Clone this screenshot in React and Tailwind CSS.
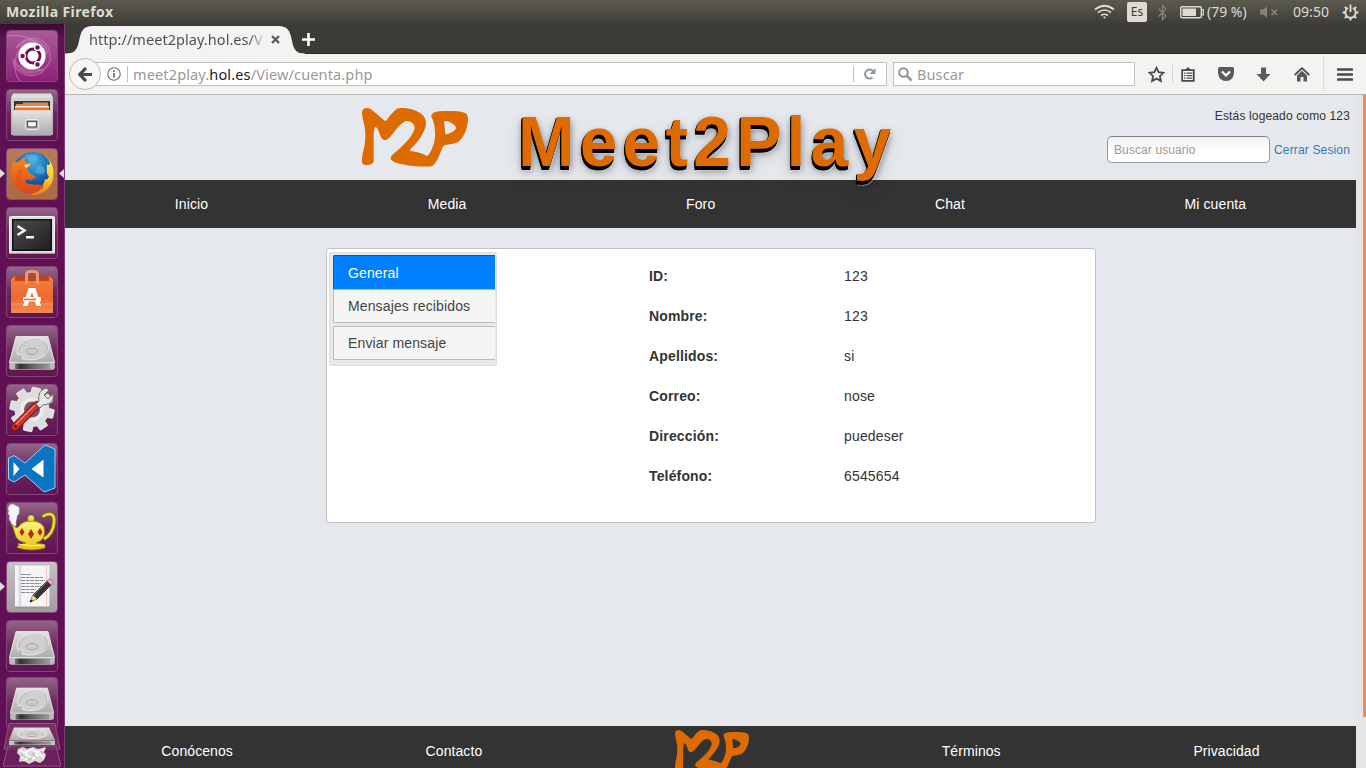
import React from "react";

const LOGO_SHAPE =
  "M66 54C65 38 84 34 97 46L134 77Q137 79 141 74C152 60 164 44 174 40C190 36 222 42 240 54C256 64 260 78 257 94C250 120 231 144 211 163Q208 168 216 169C234 171 250 177 259 182Q263 184 267 178C281 156 287 132 285 108C284 90 281 79 274 65C272 50 296 47 328 48C362 48 384 50 384 70C384 96 375 122 358 138C344 149 321 147 311 152Q307 155 304 166C298 182 288 206 278 212C262 218 196 214 164 202C150 196 149 187 157 180C177 162 218 130 224 100C224 84 208 75 196 79C178 86 162 114 148 128C138 138 130 137 124 128C117 115 114 97 107 96C100 97 101 124 101 150L101 198C100 210 82 211 73 209C66 207 66 202 66 197C66 172 76 156 76 125C77 92 67 76 66 54ZM312 82C313 76 321 78 330 82C342 88 349 94 348 100C346 108 330 115 321 118Q316 119 315 113C316 102 313 92 312 82Z";

function Logo({ className }) {
  return (
    <svg className={className} viewBox="66 39 318 177" preserveAspectRatio="none" aria-hidden="true">
      <path d={LOGO_SHAPE} fill="#dd6b00" fillRule="evenodd" />
    </svg>
  );
}

function SharedGradients() {
  return (
    <svg className="absolute h-0 w-0" aria-hidden="true">
      <defs>
        <linearGradient id="silver" x1="0" y1="0" x2="0" y2="1">
          <stop offset="0" stopColor="#e2e2e2" />
          <stop offset="1" stopColor="#adadad" />
        </linearGradient>
        <linearGradient id="darkEdge" x1="0" y1="0" x2="1" y2="0">
          <stop offset="0" stopColor="#777" />
          <stop offset="0.15" stopColor="#303030" />
          <stop offset="0.5" stopColor="#666" />
          <stop offset="1" stopColor="#9c9c9c" />
        </linearGradient>
        <linearGradient id="bag" x1="0" y1="0" x2="0" y2="1">
          <stop offset="0" stopColor="#f07f3f" />
          <stop offset="0.6" stopColor="#ee6a2e" />
          <stop offset="1" stopColor="#f38a52" />
        </linearGradient>
        <linearGradient id="screen" x1="0" y1="0" x2="1" y2="1">
          <stop offset="0" stopColor="#4c4c4c" />
          <stop offset="1" stopColor="#202020" />
        </linearGradient>
        <linearGradient id="foxBody" x1="0" y1="0" x2="0" y2="1">
          <stop offset="0" stopColor="#f08a28" />
          <stop offset="0.6" stopColor="#e8601c" />
          <stop offset="1" stopColor="#d8481a" />
        </linearGradient>
        <linearGradient id="flame" x1="0" y1="0" x2="0" y2="1">
          <stop offset="0" stopColor="#fff06a" />
          <stop offset="0.6" stopColor="#ffc92e" />
          <stop offset="1" stopColor="#ef7d1c" />
        </linearGradient>
        <radialGradient id="globe" cx="0.5" cy="0.25" r="0.7">
          <stop offset="0" stopColor="#43b1e6" />
          <stop offset="0.6" stopColor="#1b66ac" />
          <stop offset="1" stopColor="#12366f" />
        </radialGradient>
        <linearGradient id="gold" x1="0" y1="0" x2="0" y2="1">
          <stop offset="0" stopColor="#fff67e" />
          <stop offset="1" stopColor="#e5c413" />
        </linearGradient>
      </defs>
    </svg>
  );
}

const svgTile = "block h-full w-full";

function UbuntuIcon() {
  return (
    <svg className={svgTile} viewBox="0 0 52 52">
      <g fill="none" stroke="#e6b9da" strokeOpacity=".38" strokeWidth="1.2">
        <path d="M10 18C18 4 42 4 44 24C46 34 38 42 30 40" />
        <path d="M7 29C8 45 28 51 38 40" />
        <path d="M0 6C14 4 27 7 38 20M15 52C6 43 7 25 17 16" />
      </g>
      <path d="M10 19C17 5 39 5 43 23L38 26C36 14 24 9 10 19ZM8 29C10 44 25 49 36 40L32 37C22 42 14 37 8 29Z" fill="#dc9ccb" opacity=".35" />
      <circle cx="26" cy="26" r="13.6" fill="#fff" />
      <circle cx="27" cy="26" r="7" fill="none" stroke="#6b1155" strokeWidth="2.8" />
      <g stroke="#fff" strokeWidth="1.3">
        <circle cx="16.6" cy="26" r="2.9" fill="#6b1155" />
        <circle cx="31.5" cy="17.6" r="2.9" fill="#6b1155" />
        <circle cx="31.5" cy="34.6" r="2.9" fill="#6b1155" />
      </g>
    </svg>
  );
}

function FilesIcon() {
  return (
    <svg className={svgTile} viewBox="0 0 52 52">
      <path d="M7 4.5H45L47 9V46H5V9Z" fill="url(#silver)" />
      <path d="M5 9H47V22H5Z" fill="#d0d0d0" />
      <rect x="8" y="12" width="36" height="9" fill="#383838" />
      <path d="M10 15H17V13.5H42V21H10Z" fill="#d9874f" />
      <path d="M9 17H43V22H9Z" fill="#f4f0e8" />
      <path d="M9 18.5H43V21.5H9Z" fill="#ef7131" />
      <path d="M7 21.5H45V46H7Z" fill="url(#silver)" />
      <path d="M7 46.5H45" stroke="#888" />
      <rect x="19.5" y="30.5" width="13" height="10" rx="1.5" fill="#b5b5b5" stroke="#eee" />
      <rect x="21.500" y="32.500" width="9" height="5.500" fill="#f5f5f5" stroke="#555" strokeWidth="1.2" />
    </svg>
  );
}

function FirefoxIcon() {
  return (
    <svg className={svgTile} viewBox="0 0 52 52">
      <circle cx="27" cy="24.5" r="20.5" fill="url(#globe)" />
      <path d="M18 8Q28 4 33 9Q31 14 24 13ZM32 17Q40 18 39 25Q34 28 29 24Z" fill="#75cdef" opacity=".4" />
      <path d="M38 7C46 13 49 21 47 31C45 40 37 47 27 47L21 43C33 43 38 38 39 31C41 32 42 31 43 28C40 28 41 18 41 16C42 18 44 17 44 15C43 12 41 10 38 7Z" fill="url(#flame)" />
      <path d="M8 12C9 14 10 14 12 14C16 10 18 10 20 9C17 13 20 15 25 16C24 18 22 19 21 21C23 24 26 27 30 29L26 32C21 31 18 31 20 35C26 38 32 35 38 38C33 45 24 48 16 44C5 38 2 26 6 17C7 15 7 14 8 12Z" fill="url(#foxBody)" />
      <path d="M18 21C14 24 13 31 17 36C22 40 30 40 35 38L38 36C34 45 23 46 16 40C10 35 9 27 13 22Z" fill="#dd4b18" opacity=".5" />
      <path d="M18 17L25 16L20 20Z" fill="#f9e5c1" />
    </svg>
  );
}

function TerminalIcon() {
  return (
    <svg className={svgTile} viewBox="0 0 52 52">
      <rect x="3.5" y="9.5" width="45" height="37" rx="1" fill="#dcdcdc" stroke="#f4f4f4" />
      <path d="M3 46.5H49" stroke="#999" />
      <rect x="6" y="12" width="40" height="32" fill="#111" />
      <rect x="7.5" y="13.5" width="37" height="29" fill="url(#screen)" />
      <path d="M11.5 19L18.5 23.5L11.5 28" fill="none" stroke="#f5f5f5" strokeWidth="2.6" />
      <path d="M20 30.3H28" stroke="#f5f5f5" strokeWidth="2.4" />
    </svg>
  );
}

function SoftwareIcon() {
  return (
    <svg className={svgTile} viewBox="0 0 52 52">
      <path d="M8 10H45L47 15H5Z" fill="#b8451b" />
      <path d="M5 13L9 10V15H43V10L47 13V47H5Z" fill="url(#bag)" />
      <path d="M5 38H47" stroke="#fff" strokeOpacity=".25" />
      <path d="M20.5 18V8.5Q20.5 5.5 24 5.5H28Q31.5 5.5 31.5 8.5V18" fill="none" stroke="#f0966b" strokeWidth="3" />
      <path d="M22.500 22H29.500L35 40H30.500L26 26L21.500 40H17Z" fill="#fff" />
      <rect x="17" y="31" width="18" height="4.6" rx="1" fill="#fff" />
      <rect x="18" y="32.7" width="12" height="1.5" fill="#ee6a2e" />
    </svg>
  );
}

function DriveIcon() {
  return (
    <svg className={svgTile} viewBox="0 0 52 52">
      <path d="M10 11.5H42L48.5 36V43Q48 44.5 46.500 44.500H5.500Q3.500 44.500 3.500 43V36Z" fill="#bcbcbc" />
      <path d="M10 11.500H42L48.500 37.500H3.500Z" fill="url(#silver)" stroke="#e8e8e8" strokeWidth=".8" />
      <path d="M3.500 38H48.500V43Q48 44.500 46.500 44.500H5.500Q3.500 44.500 3.500 43Z" fill="#bbb" />
      <rect x="9" y="38.700" width="35" height="5.500" fill="url(#darkEdge)" />
      <path d="M12 30Q8 22 20 15Q30 10 40 16Q46 24 38 31Q29 37 16 34Q19 28 12 30Z" fill="#cfcfcf" stroke="#ececec" strokeWidth=".9" />
      <path d="M13 28Q12 20 21 16.500M39 30Q44 24 39 17.500" fill="none" stroke="#aaa" strokeWidth=".7" />
      <ellipse cx="26" cy="26.500" rx="5.500" ry="3.200" fill="#cbcbcb" stroke="#9f9f9f" strokeWidth=".9" />
    </svg>
  );
}

function SettingsIcon() {
  return (
    <svg className={svgTile} viewBox="0 0 52 52">
      <g transform="translate(26 25.500)">
        <g fill="#dedede" stroke="#fafafa" strokeWidth=".7">
          {[0, 45, 90, 135].map((a) => (
            <rect key={a} x="-4.500" y="-22" width="9" height="44" rx="1" transform={`rotate(${a + 12})`} />
          ))}
        </g>
        <circle r="17.500" fill="#dedede" />
        <circle r="11.500" fill="#ededed" />
        <circle r="8" fill="#74586d" />
      </g>
      <path d="M9 43L31 21" stroke="#7d1410" strokeWidth="8" strokeLinecap="round" />
      <path d="M9 43L31 21" stroke="#d4322d" strokeWidth="6" strokeLinecap="round" />
      <path d="M10 40L29 21" stroke="#f27f77" strokeWidth="1.500" />
      <circle cx="9.500" cy="42.500" r="1.700" fill="#6e1713" />
      <path d="M30 20L33 17Q31 7 40 4L43 6L38 11L42 15L47 10Q49 20 37 21L34 24Z" fill="#e8e8e8" stroke="#6e6e6e" />
    </svg>
  );
}

function CodeIcon() {
  return (
    <svg className={svgTile} viewBox="0 0 52 52">
      <path d="M39 2L49 6V45L38 49L19 32L8 39L2.500 36V15L8 12.500L19 20Z" fill="#0b75c4" stroke="#a9cdea" strokeWidth="1" />
      <path d="M7.500 19L13.500 26L7.500 33ZM37.500 16.500V34.500L25.500 26Z" fill="#fff" />
    </svg>
  );
}

function LampIcon() {
  return (
    <svg className={svgTile} viewBox="0 0 52 52">
      <path d="M4 3Q7 1 10 4Q14 4 13 8Q14 12 11 14Q11 17 10 19L10 24H6L5 20Q2 17 4 14Q1 12 3 9Q1 6 4 3Z" fill="#f5f5f5" stroke="#cfcfcf" strokeWidth=".5" />
      <path d="M37 15Q39 12 44 12Q49 13 48 21Q47 32 38 37" fill="none" stroke="#806b0b" strokeWidth="4" />
      <path d="M37 15Q39 12 44 12Q49 13 48 21Q47 32 38 37" fill="none" stroke="#f0db35" strokeWidth="2.600" />
      <path d="M6 22Q11 28 13 24Q17 19 25 18Q34 19 38 25Q41 38 30 41Q41 42 39 46Q26 50 12 46Q8 44 20 41Q10 39 9 32Z" fill="url(#gold)" stroke="#947a0d" strokeWidth=".8" />
      <path d="M14 22Q25 16 36 22" fill="none" stroke="#a9890e" />
      <circle cx="25" cy="16.500" r="3.200" fill="url(#gold)" stroke="#a9890e" strokeWidth=".6" />
      <path d="M16 26L18.500 30L16 34L13.500 30ZM25 27L28 32L25 37L22 32ZM34 26L36.500 30L34 34L31.500 30Z" fill="#bd2618" />
      <path d="M12 42Q25 45 39 43" fill="none" stroke="#fff78b" />
    </svg>
  );
}

function EditorIcon() {
  return (
    <svg className={svgTile} viewBox="0 0 52 52">
      <rect x="9" y="5.500" width="35" height="42" fill="#888" opacity=".4" />
      <rect x="9" y="4.500" width="34.500" height="41" fill="#f5f5f5" />
      <path d="M13 5V45M40.500 5V45" stroke="#f1b7b7" strokeWidth=".8" />
      <path d="M14.500 5V45" stroke="#b7cdf1" strokeWidth=".8" />
      <path d="M15 13.500H25M15 16.500H37M15 19.500H39M15 22.500H35M15 25.500H36M15 28.500H30M15 31.500H28" stroke="#8a8a8a" strokeWidth="1" strokeDasharray="4 .6" />
      <path d="M24 41L27 34L42 19L46 23L31 38Z" fill="#333" stroke="#111" strokeWidth=".6" />
      <path d="M28 34L42 20" stroke="#777" strokeWidth="1" />
      <path d="M24 41L27 34L31 38Z" fill="#e9d484" />
      <path d="M23.500 41.500L25 38.500L27 40Z" fill="#111" />
      <path d="M41 20L43 18Q46 17 47 20Q48 22 45 24Z" fill="#e9a3c5" stroke="#9a4f78" strokeWidth=".5" />
    </svg>
  );
}

const TILE =
  "relative h-[52px] w-[52px] shrink-0 overflow-hidden rounded-[4px] border border-[#84477a]";
const GLASS = "bg-linear-to-b from-[#93668a] via-[#6a255c] to-[#611453]";

const LAUNCHER = [
  { id: "dash", Icon: UbuntuIcon, tone: "bg-linear-to-b from-[#a95a98] to-[#8d2078]" },
  { id: "files", Icon: FilesIcon, tone: GLASS },
  { id: "firefox", Icon: FirefoxIcon, tone: "bg-linear-to-b from-[#b77c58] to-[#aa6a43]", running: true, active: true },
  { id: "terminal", Icon: TerminalIcon, tone: GLASS },
  { id: "software", Icon: SoftwareIcon, tone: GLASS },
  { id: "drive-a", Icon: DriveIcon, tone: GLASS },
  { id: "settings", Icon: SettingsIcon, tone: GLASS },
  { id: "code", Icon: CodeIcon, tone: GLASS },
  { id: "lamp", Icon: LampIcon, tone: GLASS },
  { id: "editor", Icon: EditorIcon, tone: "bg-linear-to-b from-[#c8c1c5] to-[#a69ba3]", running: true },
  { id: "drive-b", Icon: DriveIcon, tone: GLASS },
];

function Launcher() {
  return (
    <aside className="relative w-[65px] shrink-0 overflow-hidden border-r border-[#7d3c72] bg-linear-to-b from-[#3b0a33] via-[#5f1052] via-[2%] to-[#620f55]">
      <SharedGradients />
      <div className="flex flex-col items-center gap-[7px] pt-[6px]">
        {LAUNCHER.map(({ id, Icon, tone, running, active }) => (
          <div key={id} className="relative flex w-full justify-center">
            <div className={`${TILE} ${tone}`}>
              <div className="-m-px h-[52px] w-[52px]">
                <Icon />
              </div>
            </div>
            {running && (
              <svg className="absolute top-[21px] left-0 h-[9px] w-[5px]" viewBox="0 0 5 9">
                <path d="M0 0L5 4.500L0 9Z" fill="#ddd" />
              </svg>
            )}
            {active && (
              <svg className="absolute top-[21px] right-0 h-[9px] w-[5px]" viewBox="0 0 5 9">
                <path d="M5 0L0 4.500L5 9Z" fill="#ddd" />
              </svg>
            )}
          </div>
        ))}
      </div>
      <div className="mt-[5px] flex flex-col items-center">
        <div className={`${TILE} ${GLASS}`}>
          <div className="-m-px h-[50px] w-[52px]">
            <DriveIcon />
          </div>
        </div>
        <svg className="relative -mt-[6px] h-[45px] w-[58px] shrink-0" viewBox="0 0 58 45">
          <path d="M6 .5H52L57 26H1Z" fill="#753567" fillOpacity=".8" stroke="#90577f" />
          <path d="M11 4.500H46L52 17H6Z" fill="url(#silver)" />
          <path d="M6 17.500H52V22H6Z" fill="#c4c4c4" />
          <rect x="11" y="18.500" width="37" height="3" fill="url(#darkEdge)" />
          <ellipse cx="29" cy="11" rx="15" ry="4.500" fill="#cfcfcf" stroke="#ececec" />
          <ellipse cx="29" cy="12" rx="5" ry="1.700" fill="#d0d0d0" stroke="#a4a4a4" strokeWidth=".7" />
          <path d="M5 23H53L58 43H0Z" fill="#6f2b61" fillOpacity=".6" stroke="#90577f" />
          <path d="M15 26L20 24L24 26L30 24L35 26L43 24L41 29L43 32L41 37L37 40L32 38L26 41L21 38L16 39L17 33L14 30Z" fill="#d9d9d6" />
          <path d="M16 27L22 30L29 26L34 30L42 26M18 35L24 32L30 36L37 31L41 35M22 28L26 34M35 27L32 34M20 38L25 35" fill="none" stroke="#fff" strokeWidth="1.200" />
          <path d="M18 31L22 34M29 30L34 35M25 37L29 35M37 28L41 30" stroke="#999" strokeWidth=".8" />
        </svg>
      </div>
    </aside>
  );
}

function TopBar() {
  return (
    <header className="flex h-6 shrink-0 items-center bg-linear-to-b from-[#5c5a4f] to-[#3e3d38] pr-[7px] pl-[6px] font-['Noto_Sans','Open_Sans',sans-serif] text-[#dfdbd2]">
      <span className="text-[14px] leading-6 font-bold tracking-[0.4px]">Mozilla Firefox</span>
      <div className="ml-auto flex h-6 items-center">
        <svg className="h-4 w-[21px]" viewBox="0 0 21 16" fill="none" stroke="#dfdbd2" strokeWidth="1.700">
          <path d="M1 5.500Q10.500-2 20 5.500M4 8.500Q10.500 3.500 17 8.500M7 11.500Q10.500 9 14 11.500" />
          <path d="M9 13Q10.500 12 12 13L10.500 14.800Z" fill="#dfdbd2" stroke="none" />
        </svg>
        <span className="ml-[12px] flex h-5 w-5 items-center justify-center rounded-[2px] bg-[#dfdbd2] text-[12px] text-[#3c3b37]">
          Es
        </span>
        <svg className="ml-[10px] h-[17px] w-[11px]" viewBox="0 0 11 17" fill="none" stroke="#85837c" strokeWidth="1.300">
          <path d="M1.500 4.500L9 12L5.500 15.500V1.500L9 5L1.500 12.500" />
        </svg>
        <svg className="ml-[12px] h-[14px] w-6" viewBox="0 0 24 14">
          <rect x=".7" y="1.700" width="20.600" height="11" rx="1.500" fill="none" stroke="#dfdbd2" strokeWidth="1.400" />
          <path d="M22 4.500H23.300V10H22" fill="none" stroke="#dfdbd2" strokeWidth="1.200" />
          <rect x="2.500" y="3.500" width="13.500" height="7.500" fill="#dfdbd2" />
        </svg>
        <span className="ml-[3px] w-[43px] text-[14px] leading-6 tracking-[0px] whitespace-nowrap">(79 %)</span>
        <svg className="ml-[10px] h-3 w-[19px]" viewBox="0 0 19 12">
          <path d="M0 3.500H3L7 .5V11.500L3 8.500H0Z" fill="#85837c" />
          <path d="M11.500 3.500L17 9M17 3.500L11.500 9" stroke="#85837c" strokeWidth="1.700" />
        </svg>
        <span className="ml-[14px] w-[37px] text-[14px] leading-6 tracking-[0.05px]">09:50</span>
        <svg className="ml-[12px] h-[17px] w-[17px]" viewBox="0 0 17 17" fill="none" stroke="#dfdbd2">
          <path d="M6 4A5.200 5.200 0 1 0 11 4" strokeWidth="1.900" />
          <path d="M8.500 .5V8" strokeWidth="1.900" />
          <path d="M.5 8.500H3.500M13.500 8.500H16.500M2.800 2.800L5 5M14.200 2.800L12 5M2.800 14.200L5 12M14.200 14.200L12 12M8.500 13.500V16.500" strokeWidth="1.900" />
        </svg>
      </div>
    </header>
  );
}

function TabStrip() {
  return (
    <div className="relative flex h-[30px] shrink-0 items-start border-b border-[#2b2a27] bg-[#3c3b37]">
      <svg className="absolute top-[2px] left-0 h-[28px] w-[240px]" viewBox="0 0 240 28">
        <path d="M0 28V27.500C9 27.500 12 25 14 15C16 5 18 0 28 0H213C223 0 225 5 227 15C229 25 232 27.500 240 27.500V28Z" fill="#f4f3f1" />
      </svg>
      <div className="relative flex h-full items-center pt-[2px] pl-6 font-['Noto_Sans','Open_Sans',sans-serif] text-[14.500px] text-[#4c4c4c]">
        <span className="w-[177px] bg-linear-to-r from-[#4c4c4c] from-[91%] to-transparent bg-clip-text tracking-[0.05px] whitespace-nowrap text-transparent">
          http://meet2play.hol.es/V
        </span>
        <svg className="ml-[5px] h-[9px] w-[9px]" viewBox="0 0 9 9">
          <path d="M1 1L8 8M8 1L1 8" stroke="#5c5c5c" strokeWidth="2.300" />
        </svg>
        <svg className="ml-[22px] h-[13px] w-[13px]" viewBox="0 0 13 13">
          <path d="M6.500 0V13M0 6.500H13" stroke="#fff" strokeWidth="2.600" />
        </svg>
      </div>
    </div>
  );
}

function Toolbar() {
  return (
    <div className="flex h-[41px] shrink-0 items-center border-b border-[#b9b6b1] bg-[#f4f3f1] pr-[13px] pl-[4px] font-['Noto_Sans','Open_Sans',sans-serif] text-[14.500px]">
      <div className="z-10 flex h-8 w-8 shrink-0 items-center justify-center rounded-full border border-[#bcbab6] bg-[#f8f7f6]">
        <svg className="h-[15px] w-[14px]" viewBox="0 0 14 15">
          <path d="M8 1L1.800 7.500L8 14M2 7.500H14" fill="none" stroke="#4a4a4a" strokeWidth="3.200" />
        </svg>
      </div>
      <div className="-ml-[6px] flex h-6 w-[792px] shrink-0 items-center border border-[#c2c0bc] bg-white pl-[11px]">
        <svg className="h-[14px] w-[14px]" viewBox="0 0 14 14">
          <circle cx="7" cy="7" r="6.200" fill="none" stroke="#6d6d6d" strokeWidth="1.100" />
          <path d="M7 6V10.500M7 3.300V4.900" stroke="#555" strokeWidth="1.500" />
        </svg>
        <span className="ml-[6px] h-4 w-px bg-[#c2c0bc]" />
        <span className="ml-[5px] pt-px tracking-[0.14px] whitespace-nowrap text-[#999]">
          meet2play.<span className="text-[#222]">hol.es</span>/View/cuenta.php
        </span>
        <span className="ml-auto h-4 w-px bg-[#c2c0bc]" />
        <svg className="mr-[10px] ml-[10px] h-3 w-3" viewBox="0 0 12 12">
          <path d="M8.500 9.500A4.500 4.500 0 1 1 9 3.200" fill="none" stroke="#8b98a8" strokeWidth="2" />
          <path d="M11.500 0V6H5.500Z" fill="#8b98a8" />
        </svg>
      </div>
      <div className="ml-[6px] flex h-6 w-[242px] shrink-0 items-center border border-[#c2c0bc] bg-white pl-[4px]">
        <svg className="h-[15px] w-[15px]" viewBox="0 0 15 15">
          <circle cx="5.500" cy="5.500" r="4.300" fill="none" stroke="#969696" strokeWidth="2" />
          <path d="M8.500 8.500L13.500 13.500" stroke="#969696" strokeWidth="2.600" />
        </svg>
        <span className="ml-[4px] pt-px tracking-[0.1px] text-[#999]">Buscar</span>
      </div>
      <div className="flex h-full flex-1 items-center">
        <svg className="ml-[13px] h-[17px] w-[17px] shrink-0" viewBox="0 0 17 17">
          <path d="M8.500 1.800L10.600 6.200L15.500 6.800L11.900 10.200L12.900 15L8.500 12.600L4.100 15L5.100 10.200L1.500 6.800L6.400 6.200Z" fill="none" stroke="#4a4a4a" strokeWidth="1.800" />
        </svg>
        <span className="ml-[7px] h-[18px] w-px shrink-0 bg-[#d2d0cd]" />
        <svg className="ml-[8px] h-[15px] w-[14px] shrink-0" viewBox="0 0 14 15">
          <path d="M1.200 3.200H12.800V13.800H1.200Z" fill="#fff" stroke="#4a4a4a" strokeWidth="1.800" />
          <path d="M3.500 3.500L7 0L10.500 3.500Z" fill="#4a4a4a" />
          <path d="M3 6.200H4.500M5.500 6.200H11.500M3 8.700H4.500M5.500 8.700H11.500M3 11.200H4.500M5.500 11.200H11.500" stroke="#4a4a4a" strokeWidth="1.300" />
        </svg>
        <svg className="ml-[23px] h-[14px] w-4 shrink-0" viewBox="0 0 16 14">
          <path d="M1.500 0H14.500Q16 0 16 1.500V6Q15 14 8 14Q1 14 0 6V1.500Q0 0 1.500 0Z" fill="#5a5a5a" />
          <path d="M4 4.500L8 8.500L12 4.500" fill="none" stroke="#fff" strokeWidth="2.200" />
        </svg>
        <svg className="ml-[22px] h-[15px] w-[15px] shrink-0" viewBox="0 0 15 15">
          <path d="M5 .5H10V7H14.500L7.500 14.500L.5 7H5Z" fill="#5a5a5a" />
        </svg>
        <svg className="ml-[23px] h-[15px] w-4 shrink-0" viewBox="0 0 16 15">
          <path d="M.7 8L8 1.200L15.300 8" fill="none" stroke="#4a4a4a" strokeWidth="1.800" />
          <path d="M3 8.500L8 3.800L13 8.500V14.500H9.500V10H6.500V14.500H3Z" fill="#5a5a5a" />
        </svg>
        <span className="ml-[13px] h-[36px] w-px shrink-0 bg-[#dedcd9]" />
        <svg className="ml-auto h-[13px] w-4 shrink-0" viewBox="0 0 16 13">
          <path d="M1 1.500H15M1 6.500H15M1 11.500H15" stroke="#4a4a4a" strokeWidth="2.700" strokeLinecap="round" />
        </svg>
      </div>
    </div>
  );
}

const NAV = ["Inicio", "Media", "Foro", "Chat", "Mi cuenta"];

const MENU = [
  { label: "General", style: "h-[35px] border-[#0050e0] bg-[#0080ff] text-white pt-px" },
  { label: "Mensajes recibidos", style: "h-[34px] -mt-px border-[#bbb] bg-[#f5f5f5] text-[#444]" },
  { label: "Enviar mensaje", style: "mt-[3px] h-[34px] border-[#bbb] bg-[#f5f5f5] text-[#444]" },
];

const FIELDS = [
  ["ID:", "123"],
  ["Nombre:", "123"],
  ["Apellidos:", "si"],
  ["Correo:", "nose"],
  ["Dirección:", "puedeser"],
  ["Teléfono:", "6545654"],
];

function SiteHeader() {
  return (
    <div className="flex h-[85px] shrink-0 items-start">
      <Logo className="mt-[13px] ml-[297px] h-[59px] w-[106px] shrink-0" />
      <h1 className="relative z-10 mt-[5px] ml-[50px] w-[386px] shrink-0 origin-left scale-x-[0.97] text-[70px] leading-[84px] font-bold tracking-[5.300px] whitespace-nowrap text-[#dd6b00] [text-shadow:-1px_1px_0_#000,-1px_2px_0_#000,-1px_3px_0_#000,-1px_4px_0_#000,0_5px_1px_rgba(255,255,255,0.35),0_4px_8px_rgba(0,0,0,0.5),0_8px_18px_rgba(0,0,0,0.15)]">
        Meet2Play
      </h1>
      <div className="ml-auto flex flex-col items-end pr-[6px] text-[12px]">
        <p className="mt-[12px] leading-[18px] tracking-[0.14px] text-[#333]">Estás logeado como 123</p>
        <div className="mt-[11px] flex items-center gap-1">
          <div className="flex h-[27px] w-[163px] items-center rounded-[5px] border border-[#999] border-t-[#888] bg-linear-to-b from-[#f1f1f1] to-white to-[60%] px-[6px] tracking-[0.1px] text-[#999]">
            Buscar usuario
          </div>
          <a className="tracking-[0.15px] text-[#337ab7]">Cerrar Sesion</a>
        </div>
      </div>
    </div>
  );
}

function Page() {
  return (
    <main className="flex min-h-0 flex-1 bg-[#e5e8ed] font-['Liberation_Sans',Arial,sans-serif] text-[14px] text-[#333]">
      <div className="flex w-[1291px] shrink-0 flex-col overflow-hidden">
        <SiteHeader />
        <nav className="flex h-12 shrink-0 items-center justify-around bg-[#333] tracking-[0.1px] text-white">
          {NAV.map((label) => (
            <a key={label}>{label}</a>
          ))}
        </nav>
        <section className="mt-5 ml-[261px] flex h-[275px] w-[770px] shrink-0 rounded-[3px] border border-[#c3c3c3] bg-white">
          <ul className="mt-[3px] ml-[2px] flex h-[114px] w-[168px] flex-col rounded-[2px] border border-[#ddd] bg-[#e8e8e8] pt-[2px] pr-px pl-[3px]">
            {MENU.map(({ label, style }) => (
              <li
                key={label}
                className={`flex shrink-0 items-center rounded-l-[2px] border border-r-0 pl-[14px] tracking-[0.13px] whitespace-nowrap ${style}`}
              >
                {label}
              </li>
            ))}
          </ul>
          <dl className="mt-[17px] ml-[152px] grid h-[240px] grid-cols-[195px_200px] grid-rows-6">
            {FIELDS.map(([name, value]) => (
              <React.Fragment key={name}>
                <dt className="leading-5 font-bold tracking-[0.15px]">{name}</dt>
                <dd className="leading-5 tracking-[0.16px]">{value}</dd>
              </React.Fragment>
            ))}
          </dl>
        </section>
        <footer className="mt-auto flex h-[42px] shrink-0 items-start justify-around bg-[#333] tracking-[0.08px] text-white">
          <a className="pt-[15px]">Conócenos</a>
          <a className="pt-[15px]">Contacto</a>
          <Logo className="mt-[4px] h-[41px] w-[74px] shrink-0" />
          <a className="pt-[15px]">Términos</a>
          <a className="pt-[15px]">Privacidad</a>
        </footer>
      </div>
      <div className="flex flex-1 justify-end bg-[#e5e5e5]">
        <div className="h-[622px] w-[3px] bg-[#f08763]" />
      </div>
    </main>
  );
}

export default function App() {
  return (
    <div className="flex h-[768px] w-[1366px] flex-col overflow-hidden">
      <TopBar />
      <div className="flex min-h-0 flex-1">
        <Launcher />
        <div className="flex min-w-0 flex-1 flex-col">
          <TabStrip />
          <Toolbar />
          <Page />
        </div>
      </div>
    </div>
  );
}
